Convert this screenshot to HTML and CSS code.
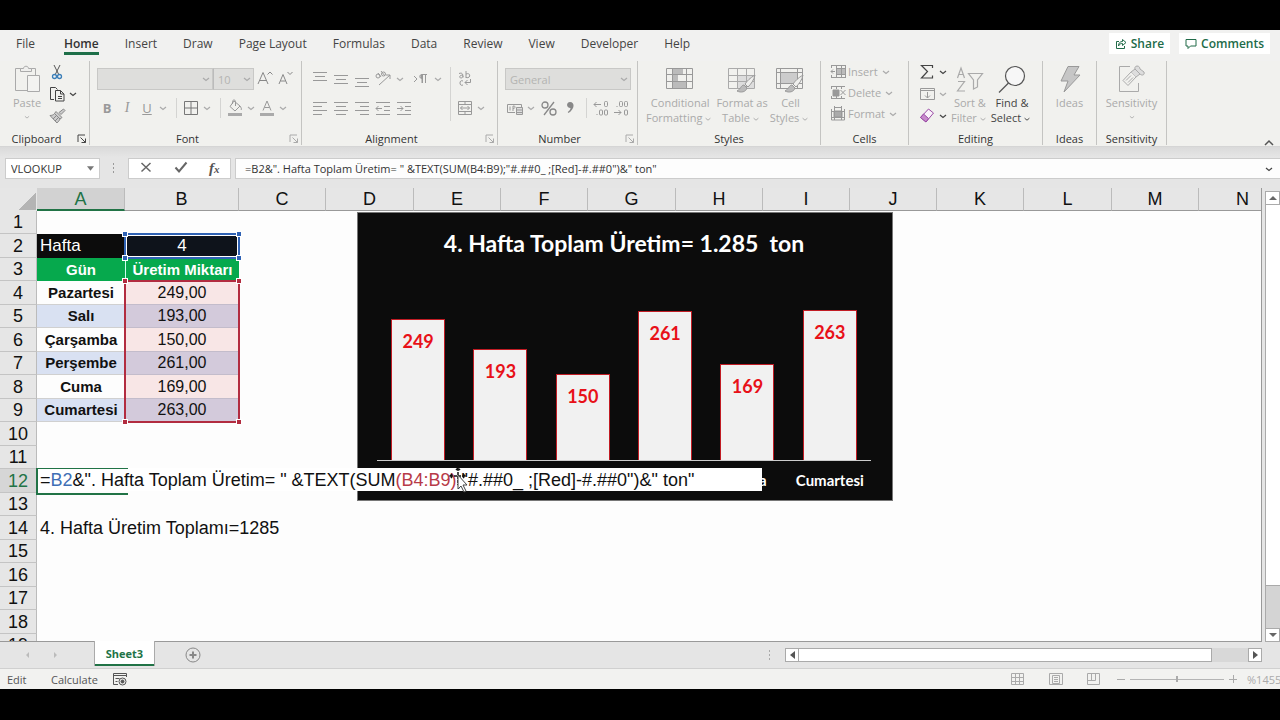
FILE: index.html
```html
<!DOCTYPE html>
<html lang="en">
<head>
<meta charset="utf-8">
<title>Sheet3</title>
<link rel="stylesheet" href="styles.css">
</head>
<body>
<svg class="defs" aria-hidden="true">
  <symbol id="caret" viewBox="0 0 12 20"><path d="M3 9l3 2.500 3-2.500" fill="none" stroke="currentColor" stroke-width="1.200"/></symbol>
  <symbol id="launch" viewBox="0 0 10 10"><path d="M1 8V1h7M3.500 3.500l5 5M8.500 4.500v4h-4" fill="none" stroke="currentColor"/></symbol>
  <symbol id="brush" viewBox="0 0 20 20"><path d="M19 1c-5 3-8 6-10 9l3 3c3-3 6-7 7-12z" fill="#efefed" stroke="#999"/><path d="M8 11c-3 0-3 4-7 6 4 2 9 1 10-3z" fill="#bbb" stroke="#999"/></symbol>
</svg>
<div class="app">
  <nav class="tabs">
    <a class="tab" href="#">File</a>
    <a class="tab tab-active" href="#">Home</a>
    <a class="tab" href="#">Insert</a>
    <a class="tab" href="#">Draw</a>
    <a class="tab" href="#">Page Layout</a>
    <a class="tab" href="#">Formulas</a>
    <a class="tab" href="#">Data</a>
    <a class="tab" href="#">Review</a>
    <a class="tab" href="#">View</a>
    <a class="tab" href="#">Developer</a>
    <a class="tab" href="#">Help</a>
    <div class="actions">
      <button class="action"><svg width="12" height="12" viewBox="0 0 12 12" fill="none" stroke="currentColor"><path d="M4 3.500H1.500v7h8V8M3.500 8c0-3 1.500-4.500 4-4.500V1.500L11 4.500 7.500 7.500V5.500C5.500 5.500 4.500 6 3.500 8z"/></svg>Share</button>
      <button class="action"><svg width="12" height="12" viewBox="0 0 12 12" fill="none" stroke="currentColor"><path d="M1 1.500h10v6.500H5.500L3 10.500V8H1z"/></svg>Comments</button>
    </div>
  </nav>

  <div class="ribbon">
    <section class="group g-clipboard">
      <div class="body">
        <button class="big" disabled>
          <svg width="28" height="30" viewBox="0 0 28 30" fill="none" stroke="#aaa"><path d="M14 25.500H2.500v-22H8M18 3.500h4.500V10"/><path d="M7.500 6.500v-3h3c0-3 5-3 5 0h3v3z" fill="#efefed"/><path d="M14.500 10.500h12v16h-12z" fill="#f3f3f1"/></svg>
          <span>Paste</span><svg class="caret"><use href="#caret"/></svg>
        </button>
        <div class="stack3">
          <div class="row"><button class="tool" aria-label="Cut"><svg width="20" height="20" viewBox="0 0 20 20" fill="none"><path d="M7 3l5 10M13 3L8 13" stroke="#555"/><circle cx="7.500" cy="14.500" r="2" stroke="#3c7fb8" stroke-width="1.300"/><circle cx="12.500" cy="14.500" r="2" stroke="#3c7fb8" stroke-width="1.300"/></svg></button></div>
          <div class="row dark"><button class="tool" aria-label="Copy"><svg width="20" height="20" viewBox="0 0 20 20" fill="none" stroke="#444"><path d="M7 15.500H3.500v-12h5l2 2"/><path d="M8.500 6.500h5l3.500 3.500v7H8.500zM13.500 6.500V10H17M11 12.500h4M11 14.500h4"/></svg></button><svg class="caret"><use href="#caret"/></svg></div>
          <div class="row"><button class="tool" aria-label="Format painter" disabled><svg width="20" height="20" viewBox="0 0 20 20" fill="none" stroke="#888"><path d="M16.500 3l1.500 1.500-4 4-2-2zM9 5.500l6 6-2 1.500-5.500-5.500zM7.500 7.500c-1 1.500-3 2-4.500 2l7 7.500c1-1 2.500-2.500 3-4" fill="#ccc"/><path d="M6 13l3-3M8 15l3-3"/></svg></button></div>
        </div>
      </div>
      <h2 class="caption">Clipboard<svg class="launch dark"><use href="#launch"/></svg></h2>
    </section>

    <section class="group g-font">
      <div class="body col">
        <div class="row">
          <span class="pick pick-font"><select disabled aria-label="Font"><option></option></select><svg class="caret"><use href="#caret"/></svg></span>
          <span class="pick pick-size"><select disabled aria-label="Font size"><option>10</option></select><svg class="caret"><use href="#caret"/></svg></span>
          <button class="tool" disabled aria-label="Grow font"><svg width="20" height="20" viewBox="0 0 20 20" fill="none" stroke="#888"><path d="M3 15L8 3.500 13 15M5 11.500h6M12.500 5.500L15 3l2.500 2.500"/></svg></button>
          <button class="tool" disabled aria-label="Shrink font"><svg width="20" height="20" viewBox="0 0 20 20" fill="none" stroke="#888"><path d="M4 15L8 5.500 12 15M5.500 12h5M12.500 3L15 5.500 17.500 3"/></svg></button>
        </div>
        <div class="row">
          <button class="tool b" disabled>B</button><button class="tool i" disabled>I</button><button class="tool u" disabled>U</button><svg class="caret"><use href="#caret"/></svg><i class="sep"></i>
          <button class="tool" disabled aria-label="Borders"><svg width="20" height="20" viewBox="0 0 20 20" fill="none" stroke="#777"><path d="M3.500 3.500h13v13h-13zM10 3.500v13M3.500 10h13"/></svg></button><svg class="caret"><use href="#caret"/></svg><i class="sep"></i>
          <button class="tool" disabled aria-label="Fill color"><svg width="20" height="20" viewBox="0 0 20 20" fill="none" stroke="#999"><path d="M9 3l6 5-5 5-5-4.500zM7.500 6V3.500c0-2 3-2 3 0V8M15 8c1 1.500 2 3 1 4"/><path d="M3 16.500h14" stroke="#aaa" stroke-width="3"/></svg></button><svg class="caret"><use href="#caret"/></svg>
          <button class="tool" disabled aria-label="Font color"><svg width="20" height="20" viewBox="0 0 20 20" fill="none" stroke="#999"><path d="M6 12.500L10 3l4 9.500M7.500 9.500h5"/><path d="M3 16.500h14" stroke="#aaa" stroke-width="3"/></svg></button><svg class="caret"><use href="#caret"/></svg>
        </div>
      </div>
      <h2 class="caption">Font<svg class="launch"><use href="#launch"/></svg></h2>
    </section>

    <section class="group g-align">
      <div class="body">
        <div class="col grow">
          <div class="row spread">
            <button class="tool" disabled aria-label="Top align"><svg width="20" height="20" viewBox="0 0 20 20" stroke="#999"><path d="M3 3.500h14M5 7.500h10M3 11.500h14"/></svg></button>
            <button class="tool" disabled aria-label="Middle align"><svg width="20" height="20" viewBox="0 0 20 20" stroke="#999"><path d="M3 6.500h14M5 10.500h10M3 14.500h14"/></svg></button>
            <button class="tool" disabled aria-label="Bottom align"><svg width="20" height="20" viewBox="0 0 20 20" stroke="#999"><path d="M3 9.500h14M5 13.500h10M3 17.500h14"/></svg></button>
            <button class="tool" disabled aria-label="Orientation"><svg width="20" height="20" viewBox="0 0 20 20" fill="none" stroke="#999"><circle cx="5" cy="7" r="2"/><path d="M5 4l3 4M8 2l4 5"/><circle cx="10.500" cy="5" r="2"/><path d="M6 16L17 6M13 6h4v4"/></svg></button><svg class="caret"><use href="#caret"/></svg>
            <button class="tool rtl" disabled aria-label="Text direction"><svg width="20" height="20" viewBox="0 0 20 20" fill="none" stroke="#999"><path d="M3 7l3 3-3 3M16 5.500h-5c-3 0-3 4 0 4V14M11.500 5.500V14M14.500 5.500V14"/><path d="M9.500 7.500h2" stroke-width="3"/></svg></button><svg class="caret"><use href="#caret"/></svg>
          </div>
          <div class="row spread">
            <button class="tool" disabled aria-label="Align left"><svg width="20" height="20" viewBox="0 0 20 20" stroke="#999"><path d="M3 4.500h14M3 8.500h9M3 12.500h14M3 16.500h9"/></svg></button>
            <button class="tool" disabled aria-label="Center"><svg width="20" height="20" viewBox="0 0 20 20" stroke="#999"><path d="M3 4.500h14M5 8.500h10M3 12.500h14M5 16.500h10"/></svg></button>
            <button class="tool" disabled aria-label="Align right"><svg width="20" height="20" viewBox="0 0 20 20" stroke="#999"><path d="M3 4.500h14M8 8.500h9M3 12.500h14M8 16.500h9"/></svg></button>
            <button class="tool" disabled aria-label="Decrease indent"><svg width="20" height="20" viewBox="0 0 20 20" fill="none" stroke="#999"><path d="M3 4.500h14M11 8.500h6M11 12.500h6M3 16.500h14M9 10.500H3M5.500 8L3 10.500 5.500 13"/></svg></button>
            <button class="tool" disabled aria-label="Increase indent"><svg width="20" height="20" viewBox="0 0 20 20" fill="none" stroke="#999"><path d="M3 4.500h14M11 8.500h6M11 12.500h6M3 16.500h14M3 10.500h6M6.500 8L9 10.500 6.500 13"/></svg></button>
          </div>
        </div>
        <i class="sep tall"></i>
        <div class="col wrap-col">
          <div class="row"><button class="tool" disabled aria-label="Wrap text"><svg width="20" height="20" viewBox="0 0 20 20" fill="none" stroke="#999"><path d="M4 4.500c3-1 4 0 4 4M8 6c-4 0-4 3-2 3 1 0 2-1 2-2M11 2v7M11 5c5-2 5 5 0 3.500M8 12c-4-2-4 6 0 4M15.500 10v3.500H10M12.500 11L10 13.500l2.500 2.500"/></svg></button></div>
          <div class="row"><button class="tool" disabled aria-label="Merge cells"><svg width="20" height="20" viewBox="0 0 20 20" fill="none" stroke="#999"><path d="M3.500 3.500h13v13h-13zM3.500 6.500h13M3.500 13.500h13M10 3.500v3M10 13.500v3M5.500 10h9M7.500 8l-2 2 2 2M12.500 8l2 2-2 2"/></svg></button><svg class="caret"><use href="#caret"/></svg></div>
        </div>
      </div>
      <h2 class="caption">Alignment<svg class="launch"><use href="#launch"/></svg></h2>
    </section>

    <section class="group g-number">
      <div class="body col">
        <div class="row"><span class="pick pick-number"><select disabled aria-label="Number format"><option>General</option></select><svg class="caret"><use href="#caret"/></svg></span></div>
        <div class="row">
          <button class="tool" disabled aria-label="Currency"><svg width="20" height="20" viewBox="0 0 20 20" fill="none" stroke="#999"><path d="M10 14.500H2.500v-8h14V9M5 8.500v4M8 8v5M8 8c3 0 3 2 0 2.500"/><path d="M11.500 9.500h6v7h-6zM11.500 12h6M11.500 14.500h6" fill="#ddd"/></svg></button><svg class="caret"><use href="#caret"/></svg>
          <button class="tool number-gap" disabled aria-label="Percent"><svg width="20" height="20" viewBox="0 0 20 20" fill="none" stroke="#888" stroke-width="1.300"><circle cx="6" cy="7" r="3"/><circle cx="14" cy="14" r="3"/><path d="M15 4L5 17"/></svg></button>
          <button class="tool" disabled aria-label="Comma"><svg width="20" height="20" viewBox="0 0 20 20" fill="#888"><path d="M11 4c5 0 5 7-1.500 11l-.8-1c2-1.500 2.800-2.500 2.800-4C7 10 7 4 11 4z"/></svg></button><i class="sep"></i>
          <button class="tool" disabled aria-label="Increase decimal"><svg width="20" height="20" viewBox="0 0 20 20" fill="none" stroke="#999"><path d="M10 6.500H3M5.500 4L3 6.500 5.500 9M6 17v-1"/><rect x="13.500" y="3.500" width="3" height="5" rx="1"/><rect x="8.500" y="12" width="3" height="5" rx="1"/><rect x="13.500" y="12" width="3" height="5" rx="1"/></svg></button>
          <button class="tool" disabled aria-label="Decrease decimal"><svg width="20" height="20" viewBox="0 0 20 20" fill="none" stroke="#999"><path d="M3 14.500h7M7.500 12l2.500 2.500L7.500 17M6 9V8"/><rect x="8.500" y="3.500" width="3" height="5" rx="1"/><rect x="13.500" y="3.500" width="3" height="5" rx="1"/><rect x="13.500" y="12" width="3" height="5" rx="1"/></svg></button>
        </div>
      </div>
      <h2 class="caption">Number<svg class="launch"><use href="#launch"/></svg></h2>
    </section>

    <section class="group g-styles">
      <div class="body">
        <button class="big" disabled><svg width="28" height="30" viewBox="0 0 28 30" fill="none" stroke="#999"><path d="M6 3h11v6H6zM6 9h6v7H6zM6 16h14v7H6z" fill="#bbb" stroke="none"/><path d="M.5 3.500h26v20H.5zM.5 9.500h26M.5 16.500h26M6.500 3.500v20M20.500 3.500v20"/></svg><span>Conditional<br>Formatting<svg class="caret"><use href="#caret"/></svg></span></button>
        <button class="big" disabled><svg width="28" height="30" viewBox="0 0 28 30" fill="none" stroke="#aaa"><path d="M9 10h17v13H9z" fill="#ddd" stroke="none"/><path d="M.5 3.500h26v20H.5zM.5 10.500h26M.5 16.500h26M9.500 3.500v20M18.500 3.500v20"/><use href="#brush" x="8" y="9" width="20" height="20"/></svg><span>Format as<br>Table<svg class="caret"><use href="#caret"/></svg></span></button>
        <button class="big" disabled><svg width="28" height="30" viewBox="0 0 28 30" fill="none" stroke="#999"><path d="M5 8h17v10H5z" fill="#ccc" stroke="none"/><path d="M.5 3.500h26v20H.5zM.5 7.500h26M.5 18.500h26M4.500 3.500v20M21.500 3.500v20"/><use href="#brush" x="8" y="9" width="20" height="20"/></svg><span>Cell<br>Styles<svg class="caret"><use href="#caret"/></svg></span></button>
      </div>
      <h2 class="caption">Styles</h2>
    </section>

    <section class="group g-cells">
      <div class="body">
        <div class="stack3">
          <button class="line" disabled><svg width="16" height="16" viewBox="0 0 16 16" fill="none" stroke="#999"><path d="M6 4h9v7H6z" fill="#bbb" stroke="none"/><path d="M1 1.500h14M1 13.500h14M1.500 1v3M1.500 11v3M6.500 1v13M11.500 1v13M6.500 4.500H15M6.500 10.500H15M15.500 1v13M5 7.500H1M3 5.500l-2 2 2 2"/></svg>Insert<svg class="caret"><use href="#caret"/></svg></button>
          <button class="line" disabled><svg width="16" height="16" viewBox="0 0 16 16" fill="none" stroke="#999"><path d="M3 5h6v6H3z" fill="#999"/><path d="M1 1.500h14M1 13.500h14M1.500 1v3M1.500 11v3M6.500 1v3M11.500 1v3M6.500 11v3M11.500 11v3M10.500 5l5 5M15.500 5l-5 5"/></svg>Delete<svg class="caret"><use href="#caret"/></svg></button>
          <button class="line" disabled><svg width="16" height="16" viewBox="0 0 16 16" fill="none" stroke="#999"><path d="M4 5h8v6H4z" fill="#aaa"/><path d="M1.500 3v11h13V3M4.500 3v11M11.500 3v11M1.500 5.500h13M1.500 11.500h13M4 1.500h8M4.500 0v3M11.500 0v3"/></svg>Format<svg class="caret"><use href="#caret"/></svg></button>
        </div>
      </div>
      <h2 class="caption">Cells</h2>
    </section>

    <section class="group g-edit">
      <div class="body">
        <div class="stack3">
          <div class="row dark"><button class="tool" aria-label="AutoSum"><svg width="20" height="20" viewBox="0 0 20 20" fill="none" stroke="#444" stroke-width="1.200"><path d="M15.500 6V3.500H4.500l6 6-6 6.500h11v-2.500"/></svg></button><svg class="caret"><use href="#caret"/></svg></div>
          <div class="row"><button class="tool" disabled aria-label="Fill"><svg width="20" height="20" viewBox="0 0 20 20" fill="none" stroke="#999"><path d="M3.500 4.500h14v11h-14zM3.500 6.500h14M10.500 8v6M8 11.500l2.500 2.500 2.500-2.500"/></svg></button><svg class="caret"><use href="#caret"/></svg></div>
          <div class="row dark"><button class="tool" aria-label="Clear"><svg width="20" height="20" viewBox="0 0 20 20" stroke="#9a4aa5"><path d="M3.500 11.500l8-8.500 5 4-7.500 9z" fill="#faf3fa"/><path d="M3.500 11.500l3-3.500 5 4.500-2.500 3.500z" fill="#c78acb"/></svg></button><svg class="caret"><use href="#caret"/></svg></div>
        </div>
        <button class="big" disabled><svg width="28" height="30" viewBox="0 0 28 30" fill="none" stroke="#aaa" stroke-width="1.200"><path d="M1.500 13L5 3l3.500 10M2.500 9.500h5M2 16.500h6.500l-7 9.500H9M12.500 8.500h14l-5 6.500v7l-4 2v-9z"/></svg><span>Sort &amp;<br>Filter<svg class="caret"><use href="#caret"/></svg></span></button>
        <button class="big dark"><svg width="28" height="30" viewBox="0 0 28 30" fill="none" stroke="#555" stroke-width="1.200"><circle cx="17" cy="11" r="9.500" fill="#f7f7f7"/><path d="M10.500 18L1 27.500"/></svg><span>Find &amp;<br>Select<svg class="caret"><use href="#caret"/></svg></span></button>
      </div>
      <h2 class="caption">Editing</h2>
    </section>

    <section class="group g-ideas">
      <div class="body"><button class="big" disabled><svg width="28" height="30" viewBox="0 0 28 30" fill="#c6c6c6" stroke="#999"><path d="M12 1.500h11l-5 8.500h6L8 27l4-11H5z"/></svg><span>Ideas</span></button></div>
      <h2 class="caption">Ideas</h2>
    </section>

    <section class="group g-sens">
      <div class="body"><button class="big" disabled><svg width="28" height="30" viewBox="0 0 28 30" fill="none" stroke="#aaa"><path d="M12 1.500H1.500v25h19V18"/><path d="M5 15.500l8-8.500 5 5-8 8.500zM8 15.500l5-5M10 17.500l5-5"/><path d="M13 7l4-3c-1-4 5-4 5 0l4 3c1 3-2 4-4 2l-4 3M17 4l5 5" fill="#ddd"/></svg><span>Sensitivity</span><svg class="caret"><use href="#caret"/></svg></button></div>
      <h2 class="caption">Sensitivity</h2>
    </section>
    <button class="collapse" aria-label="Collapse ribbon"><svg width="12" height="8" viewBox="0 0 12 8" fill="none" stroke="#555" stroke-width="1.500"><path d="M2 6l4-4 4 4"/></svg></button>
  </div>

  <div class="formula-bar">
    <div class="name-box"><input value="VLOOKUP" aria-label="Name box"><svg width="8" height="5" viewBox="0 0 8 5"><path d="M0 0h8L4 5z" fill="#777"/></svg></div>
    <svg class="grip" width="3" height="13" viewBox="0 0 3 13"><path d="M1 1h1v2H1zM1 5h1v2H1zM1 9h1v2H1z" fill="#999"/></svg>
    <div class="entry">
      <button aria-label="Cancel"><svg width="14" height="14" viewBox="0 0 14 14" fill="none" stroke="#666" stroke-width="1.500"><path d="M2.500 3l9 8.500M11.500 3l-9 8.500"/></svg></button>
      <button aria-label="Enter"><svg width="14" height="14" viewBox="0 0 14 14" fill="none" stroke="#666" stroke-width="2"><path d="M1.500 7.500L5 11.500 12.500 2.500"/></svg></button>
      <button class="fx">f<small>x</small></button>
    </div>
    <div class="formula"><input aria-label="Formula" value="=B2&amp;&quot;. Hafta Toplam Üretim= &quot; &amp;TEXT(SUM(B4:B9);&quot;#.##0_ ;[Red]-#.##0&quot;)&amp;&quot; ton&quot;"><svg class="caret dark"><use href="#caret"/></svg></div>
  </div>

  <main class="work">
    <div class="sheet">
      <table class="grid">
        <colgroup><col class="c-head"><col class="c-a"><col class="c-b"><col><col class="c-w"><col><col><col class="c-w"><col><col><col><col><col class="c-w"><col></colgroup>
        <thead><tr><th class="corner"></th><th class="on">A</th><th>B</th><th>C</th><th>D</th><th>E</th><th>F</th><th>G</th><th>H</th><th>I</th><th>J</th><th>K</th><th>L</th><th>M</th><th>N</th></tr></thead>
        <tbody>
          <tr><th>1</th><td colspan="14"></td></tr>
          <tr><th>2</th><td class="hafta">Hafta</td><td class="week">4</td><td colspan="12"></td></tr>
          <tr><th>3</th><td class="green">Gün</td><td class="green edge">Üretim Miktarı</td><td colspan="12"></td></tr>
          <tr><th>4</th><td class="day">Pazartesi</td><td class="val">249,00</td><td colspan="12"></td></tr>
          <tr class="band"><th>5</th><td class="day">Salı</td><td class="val">193,00</td><td colspan="12"></td></tr>
          <tr><th>6</th><td class="day">Çarşamba</td><td class="val">150,00</td><td colspan="12"></td></tr>
          <tr class="band"><th>7</th><td class="day">Perşembe</td><td class="val">261,00</td><td colspan="12"></td></tr>
          <tr><th>8</th><td class="day">Cuma</td><td class="val">169,00</td><td colspan="12"></td></tr>
          <tr class="band"><th>9</th><td class="day">Cumartesi</td><td class="val">263,00</td><td colspan="12"></td></tr>
          <tr><th>10</th><td colspan="14"></td></tr>
          <tr><th>11</th><td colspan="14"></td></tr>
          <tr><th class="on">12</th><td colspan="14"></td></tr>
          <tr><th>13</th><td colspan="14"></td></tr>
          <tr><th>14</th><td colspan="14">4. Hafta Üretim Toplamı=1285</td></tr>
          <tr><th>15</th><td colspan="14"></td></tr>
          <tr><th>16</th><td colspan="14"></td></tr>
          <tr><th>17</th><td colspan="14"></td></tr>
          <tr><th>18</th><td colspan="14"></td></tr>
          <tr><th>19</th><td colspan="14"></td></tr>
        </tbody>
      </table>

      <figure class="chart">
        <figcaption>4. Hafta Toplam Üretim= 1.285&nbsp; ton</figcaption>
        <div class="plot">
          <div class="bar" style="height:141px">249</div>
          <div class="bar" style="height:111px">193</div>
          <div class="bar" style="height:86px">150</div>
          <div class="bar" style="height:149px">261</div>
          <div class="bar" style="height:96px">169</div>
          <div class="bar" style="height:150px">263</div>
        </div>
        <div class="axis"><span></span><span></span><span></span><span></span><span>Cuma</span><span>Cumartesi</span></div>
      </figure>

      <div class="range range-blue"><i></i><i></i><i></i><i></i></div>
      <div class="range range-red"><i></i><i></i><i></i><i></i></div>
      <div class="editor" role="textbox" aria-label="Cell A12">=<span class="ref-blue">B2</span>&amp;". Hafta Toplam Üretim= " &amp;TEXT(SUM<span class="ref-red">(B4:B9)</span>;"#.##0_ ;[Red]-#.##0")&amp;" ton"</div>
      <svg class="pointer" width="22" height="28" viewBox="0 0 22 28"><path d="M9 1v17M1 9h15M7 3l2-2 2 2M3 7L1 9l2 2M14 7l2 2-2 2" fill="none" stroke="#111" stroke-width="1.500" stroke-dasharray="3 1"/><path d="M9 8v14l3-3 3 6 2-1-3-6h4z" fill="#fff" stroke="#444"/></svg>
    </div>
    <div class="vscroll">
      <button aria-label="Scroll up"><svg width="8" height="4" viewBox="0 0 8 4"><path d="M4 0l4 4H0z" fill="#666"/></svg></button>
      <div class="vtrack"><div class="vthumb"></div></div>
      <button aria-label="Scroll down"><svg width="8" height="4" viewBox="0 0 8 4"><path d="M0 0h8L4 4z" fill="#666"/></svg></button>
    </div>
  </main>

  <footer class="sheetbar">
    <svg class="nav-arrows" width="32" height="8" viewBox="0 0 32 8" fill="#bbb"><path d="M3 1v6L0 4zM28 1v6l3-3z"/></svg>
    <button class="sheet-tab">Sheet3</button>
    <button class="add" aria-label="New sheet"><svg width="16" height="16" viewBox="0 0 16 16" fill="none" stroke="#888"><circle cx="8" cy="8" r="7"/><path d="M8 4.500v7M4.500 8h7" stroke-width="2"/></svg></button>
    <div class="hscroll">
      <svg class="grip" width="3" height="13" viewBox="0 0 3 13"><path d="M1 1h1v2H1zM1 5h1v2H1zM1 9h1v2H1z" fill="#aaa"/></svg>
      <button aria-label="Scroll left"><svg width="5" height="8" viewBox="0 0 5 8"><path d="M5 0v8L0 4z" fill="#555"/></svg></button>
      <div class="htrack"><div class="hthumb"></div></div>
      <button aria-label="Scroll right"><svg width="5" height="8" viewBox="0 0 5 8"><path d="M0 0v8l5-4z" fill="#555"/></svg></button>
    </div>
  </footer>

  <div class="status">
    <span class="mode">Edit</span><span>Calculate</span>
    <svg class="macro" width="14" height="13" viewBox="0 0 14 13" fill="none" stroke="#555"><path d="M5 11.500H.5v-11h13V4M.5 2.500h13M2.500 5.500h4M2.500 8.500h2"/><circle cx="9.500" cy="8.500" r="3.500"/><circle cx="9.500" cy="8.500" r="1.500" fill="#555"/></svg>
    <div class="views">
      <svg width="14" height="14" viewBox="0 0 14 14" fill="none" stroke="#aaa"><path d="M.5 1.500h12v11H.5zM.5 5.500h12M.5 9.500h12M4.500 1.500v11M8.500 1.500v11"/></svg>
      <svg width="14" height="14" viewBox="0 0 14 14" fill="none" stroke="#aaa"><path d="M.5 1.500h13v11H.5zM3.500 3.500h7v8h-7zM5 5.500h4M5 7.500h4M5 9.500h4"/></svg>
      <svg width="14" height="14" viewBox="0 0 14 14" fill="none" stroke="#aaa"><path d="M.5 1.500h12v11H.5zM.5 8.500h8v-7M4.500 1.500v7"/></svg>
    </div>
    <div class="zoom"><svg width="8" height="8" viewBox="0 0 8 8" stroke="#aaa"><path d="M0 4.500h8"/></svg><input type="range" min="0" max="100" value="50" aria-label="Zoom"><svg width="8" height="8" viewBox="0 0 8 8" stroke="#aaa"><path d="M0 4.500h8M4.500 0v8"/></svg><span class="pct">%1455</span></div>
  </div>
</div>
</body>
</html>
```

FILE: styles.css
```css
* { box-sizing: border-box; }
body { margin: 0; background: #000; font-family: "Open Sans", "Noto Sans", sans-serif; font-size: 11px; color: #333; }
button { border: 0; padding: 0; background: none; font: inherit; color: inherit; }
input, select { font: inherit; color: inherit; border: 0; background: none; }
.defs { position: absolute; width: 0; height: 0; }
.app { display: flex; flex-direction: column; height: 100vh; padding: 30px 0 31px; overflow: hidden; }

.tabs { display: flex; flex: none; gap: 26px; height: 31px; padding: 0 10px 0 16px; background: #f1f1f0; font-size: 12px; }
.tab { color: #444; text-decoration: none; line-height: 27px; height: 25px; white-space: nowrap; }
.tab-active { margin-left: 3px; font-weight: 600; border-bottom: 3px solid #1e6f49; color: #333; }
.actions { display: flex; gap: 9px; margin-left: auto; padding-top: 3px; }
.action { display: flex; align-items: center; gap: 4px; height: 21px; padding: 0 6px; background: #fff; color: #216b49; font-weight: 600; }

.ribbon { display: flex; flex: none; height: 86px; background: #f1f1ee; border-bottom: 1px solid #d5d5d5; }
.group { flex: none; display: flex; flex-direction: column; margin-bottom: 1px; padding-top: 2px; border-right: 1px solid #c4c4c2; color: #aaa; }
.body { display: flex; flex: 1; }
.col { display: flex; flex-direction: column; gap: 7px; padding-top: 5px; }
.grow { flex: 1; }
.row { display: flex; align-items: center; height: 22px; }
.stack3 { display: flex; flex-direction: column; margin-top: -2px; }
.caption { position: relative; margin: 0; height: 12px; line-height: 12px; font-size: 11px; font-weight: 500; color: #333; text-align: center; }
.launch { position: absolute; right: 2px; top: 1px; width: 10px; height: 10px; color: #aaa; }
.dark, .launch.dark { color: #444; }
.caret { flex: none; width: 12px; height: 20px; }
.tool { display: flex; flex: none; align-items: center; justify-content: center; width: 20px; height: 20px; color: #999; }
.rtl { margin-left: 4px; }
.number-gap { margin-left: 2px; }
.sep { flex: none; width: 1px; height: 20px; margin: 0 4px 0 7px; background: #d4d4d2; }
.sep.tall { height: 54px; margin: 4px 4px 0; }
.big { display: flex; flex-direction: column; align-items: center; padding-top: 2px; line-height: 15px; white-space: nowrap; }
.big span .caret { height: 16px; vertical-align: middle; }
.big > .caret { height: 14px; }
.line { display: flex; align-items: center; gap: 2px; height: 21px; }
.b { font-weight: 700; font-size: 13px; }
.i { font-family: "Liberation Serif", serif; font-style: italic; font-size: 14px; }
.u { text-decoration: underline; font-size: 13px; }
.pick { position: relative; height: 22px; background: #dededc; border: 1px solid #c8c8c6; }
.pick select { width: 100%; height: 20px; padding: 0 4px; appearance: none; color: #b4b4b2; opacity: 1; }
.pick .caret { position: absolute; right: 0; top: 0; color: #aaa; }
.pick-font { width: 116px; }
.pick-size { width: 41px; margin-right: 1px; border-left: 1px solid #bbb; }
.pick-number { width: 126px; }

.g-clipboard { width: 90px; }
.g-clipboard .body { padding-left: 13px; gap: 6px; }
.g-clipboard .caption { padding-right: 16px; }
.g-font { width: 212px; }
.g-font .body, .g-number .body { padding-left: 7px; }
.g-font .caption, .g-align .caption, .g-number .caption { padding-right: 16px; }
.g-align { width: 196px; }
.g-align .body { padding-left: 8px; }
.spread { gap: 1px; }
.wrap-col { width: 42px; }
.g-number { width: 140px; }
.g-styles { width: 183px; }
.g-styles .body { padding-left: 8px; gap: 2px; }
.g-cells { width: 88px; }
.g-cells .body { padding-left: 9px; }
.g-edit { width: 134px; }
.g-edit .body { padding-left: 8px; gap: 2px; }
.g-ideas { width: 54px; }
.g-sens { width: 70px; }
.g-ideas .body, .g-sens .body { justify-content: center; }
.collapse { margin: auto 5px 1px auto; height: 10px; }

.formula-bar { display: flex; flex: none; align-items: center; height: 41px; padding: 2px 0 0 5px; background: linear-gradient(#dadada, #e5e5e5 10px); }
.name-box { display: flex; align-items: center; width: 95px; height: 21px; background: #fff; border: 1px solid #ccc; padding: 0 5px; }
.name-box input { width: 76px; padding: 0; font-size: 11px; }
.grip { margin: 0 13px 0 12px; }
.entry { display: flex; justify-content: space-around; align-items: center; width: 103px; height: 21px; background: #fff; border: 1px solid #ccc; }
.fx { font-family: "Liberation Serif", serif; font-style: italic; font-weight: 700; font-size: 15px; color: #555; line-height: 15px; }
.fx small { font-size: 11px; }
.formula { display: flex; flex: 1; align-items: center; height: 21px; margin-left: 4px; padding-left: 9px; padding-right: 5px; background: #fdfdfd; border: 1px solid #ccc; border-right: 0; }
.formula input { flex: 1; padding: 0; font-size: 11px; }

.work { display: flex; flex: 1; min-height: 0; background: #e5e5e5; }
.sheet { position: relative; flex: 1; min-width: 0; overflow: hidden; background: #fdfdfd; border-right: 1px solid #999; border-bottom: 1px solid #999; font-family: "Liberation Sans", Arial, sans-serif; font-size: 18px; color: #111; }
.grid { width: 1287px; table-layout: fixed; border-collapse: separate; border-spacing: 0; }
.grid col { width: 87px; }
.grid .c-head { width: 37px; }
.grid .c-a { width: 88px; }
.grid .c-b { width: 114px; }
.grid .c-w { width: 88px; }
.grid th, .grid td { padding: 0; height: 23px; line-height: 20px; font-weight: 400; overflow: hidden; white-space: nowrap; }
.grid tbody tr:nth-child(even) > * { height: 24px; }
.grid th { background: #e6e6e6; border-right: 1px solid #bbb; border-bottom: 1px solid #c4c4c4; }
.grid thead th { border-bottom: 1px solid #999; }
.grid thead th.on { background: #d2d2d2; color: #217346; border-bottom: 2px solid #217346; }
.grid tbody th.on { background: #d6d6d6; color: #217346; }
.grid .corner { background: linear-gradient(135deg, #e6e6e6 70%, #b4b4b4 70%); border-color: #e6e6e6; }
.grid td { padding-left: 3px; }
.grid td.hafta { background: #0c0c0c; color: #fff; font-size: 17px; }
.grid td.week { padding: 0; background: #0e131b; color: #fff; font-size: 17px; text-align: center; }
.grid td.green { padding: 0; background: #06a94d; color: #fff; font-size: 15px; font-weight: 700; text-align: center; }
.grid td.edge { border-left: 1px solid #cfe; }
.grid td.day { padding: 0; font-size: 15px; font-weight: 700; text-align: center; border-bottom: 1px solid #d0d0d0; }
.grid td.val { padding: 0; font-size: 16px; text-align: center; background: #f8e6e6; border-bottom: 1px solid #c3bccb; }
.grid .band td.day { background: #d9e1f2; }
.grid .band td.val { background: #d3cadb; }

.chart { position: absolute; left: 357px; top: 24px; width: 536px; margin: 0; padding: 16px 21px 9px 19px; background: #0c0c0c; border: 1px solid #777; color: #fff; font-family: Lato, "Open Sans", sans-serif; font-weight: 700; }
.chart figcaption { height: 28px; line-height: 28px; font-size: 23px; text-align: center; }
.plot { display: flex; align-items: flex-end; justify-content: space-around; height: 204px; border-bottom: 1px solid #ccc; }
.bar { width: 54px; padding-top: 10px; background: #f1f1f1; border: 1px solid #c11c24; border-bottom: 0; color: #e81018; font-size: 18px; line-height: 22px; text-align: center; }
.axis { display: flex; height: 30px; padding-top: 4px; font-size: 15px; line-height: 30px; }
.axis span { flex: 1; text-align: center; }

.range { position: absolute; left: 124px; width: 116px; border: 2px solid; outline: 1px solid #fff; outline-offset: -3px; }
.range-blue { top: 45px; height: 26px; color: #2f62b4; }
.range-red { top: 92px; height: 143px; color: #b22c40; outline: 0; }
.range i { position: absolute; width: 6px; height: 6px; background: currentColor; border: 1px solid #fff; }
.range i:nth-child(1) { left: -4px; top: -4px; }
.range i:nth-child(2) { right: -4px; top: -4px; }
.range i:nth-child(3) { left: -4px; bottom: -4px; }
.range i:nth-child(4) { right: -4px; bottom: -4px; }
.editor { position: absolute; left: 36px; top: 280px; width: 726px; height: 23px; padding: 1px 0 0 4px; line-height: 22px; white-space: pre; background: #fff; }
.editor::before { content: ""; position: absolute; left: 0; top: 0; width: 90px; height: 24px; border: solid #217346; border-width: 1px 0 2px 2px; }
.ref-blue { color: #3f6fb5; }
.ref-red { color: #b83a48; }
.pointer { position: absolute; left: 449px; top: 279px; }

.vscroll { display: flex; flex: none; flex-direction: column; width: 15px; margin: 3px 0 0 3px; border-left: 1px solid #aaa; }
.vscroll button { display: flex; align-items: center; justify-content: center; height: 14px; background: #fff; border: 1px solid #aaa; border-left: 0; }
.vtrack { flex: 1; background: #d4d4d4; }
.vthumb { height: 90%; background: #fff; border-bottom: 1px solid #aaa; }

.sheetbar { display: flex; flex: none; height: 27px; background: #e5e5e5; border-bottom: 1px solid #d0d0d0; }
.nav-arrows { margin: 9px 36px 0 26px; }
.sheet-tab { position: relative; width: 61px; height: 25px; margin-top: -1px; background: #fff; border: solid #aaa; border-width: 0 1px; box-shadow: inset 0 -2px #217346; color: #217346; font-weight: 700; }
.add { margin-left: 30px; height: 26px; display: flex; align-items: center; }
.hscroll { display: flex; align-items: center; margin-left: auto; width: 512px; padding-right: 18px; }
.hscroll .grip { margin: 0 14px 0 0; }
.hscroll button { display: flex; align-items: center; justify-content: center; flex: none; width: 14px; height: 14px; background: #fff; border: 1px solid #aaa; }
.htrack { flex: 1; height: 14px; background: #d8d8d8; }
.hthumb { width: 92%; height: 14px; background: #fff; border: 1px solid #aaa; border-left: 0; }

.status { display: flex; flex: none; align-items: center; height: 20px; padding-left: 7px; background: #f2f2f0; color: #555; }
.mode { width: 44px; }
.macro { margin-left: 15px; }
.views { display: flex; gap: 24px; margin-left: auto; }
.zoom { display: flex; align-items: center; gap: 5px; margin-left: 16px; color: #aaa; }
.zoom input { width: 94px; height: 12px; margin: 0; appearance: none; background: linear-gradient(#b4b4b4, #b4b4b4) center / 100% 1px no-repeat; }
.zoom input::-webkit-slider-thumb { appearance: none; width: 2px; height: 6px; background: #aaa; }
.pct { width: 38px; padding-left: 5px; }
```
